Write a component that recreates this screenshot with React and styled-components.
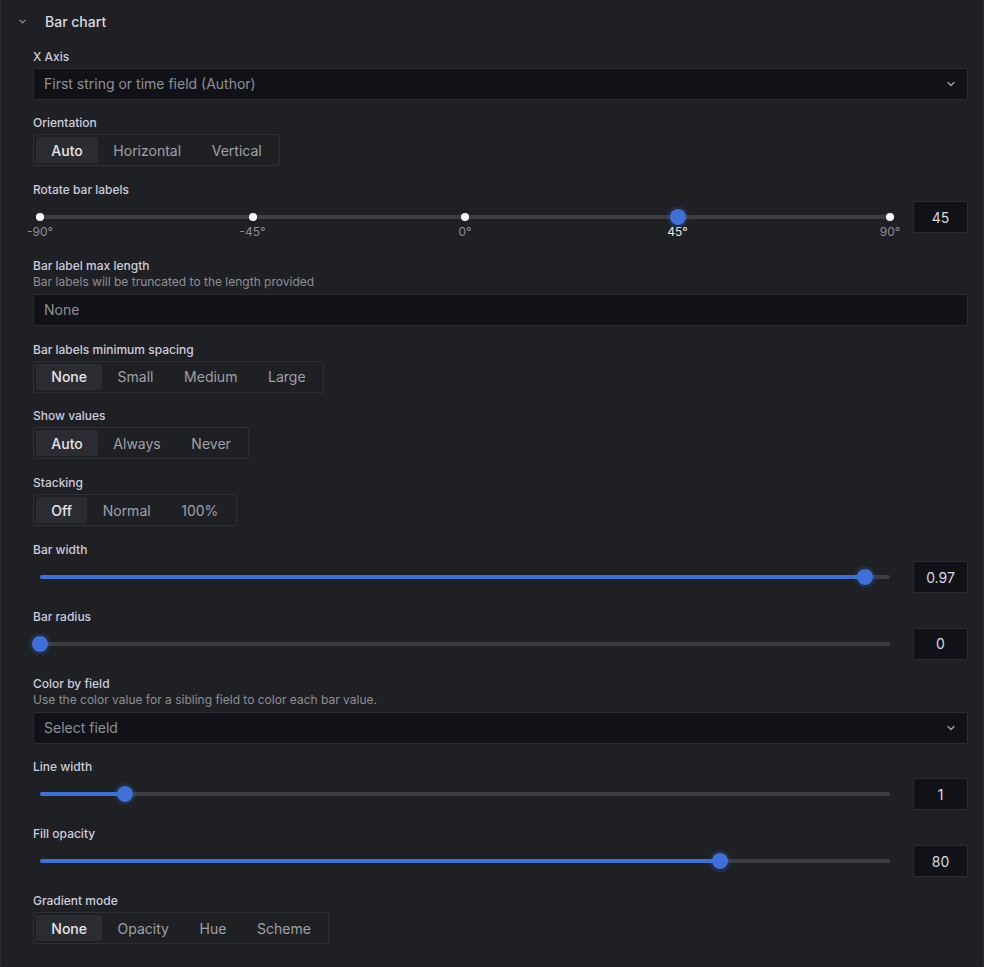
import React from "react"
import styled, { createGlobalStyle, css } from "styled-components"

const GlobalStyle = createGlobalStyle`
  html, body {
    margin: 0;
    padding: 0;
    background: #1f2024;
  }
  body {
    font-family: Inter, "Noto Sans", "Liberation Sans", sans-serif;
    color: #ccccdc;
    -webkit-font-smoothing: antialiased;
  }
`

const Pane = styled.div`
  width: 984px;
  min-height: 967px;
  box-sizing: border-box;
  background: #1f2024;
  border-left: 1px solid #2a2b30;
  border-right: 1px solid #2a2b30;
`

const Header = styled.div`
  display: flex;
  align-items: center;
  height: 42px;
  padding-left: 16px;
  box-sizing: border-box;
`

const Chevron = styled.span`
  display: flex;
  width: 10px;
  justify-content: center;
  margin-right: 18px;
  color: #8e8e96;
`

const Title = styled.h2`
  margin: 0;
  font-size: 14px;
  font-weight: 500;
  color: #d8d9e0;
`

// gap is a touch under 16px: the reference drifts ~2px over the whole list
const Body = styled.div`
  padding: 6.5px 15px 16px 32px;
  display: flex;
  flex-direction: column;
  gap: 15.8px;
`

const Field = styled.div`
  display: flex;
  flex-direction: column;
`

const Label = styled.label`
  font-size: 12px;
  font-weight: 500;
  line-height: 15px;
  color: #ccccdc;
`

const Description = styled.div`
  font-size: 12px;
  line-height: 16px;
  margin-top: 1px;
  color: #8e8e94;
`

const Control = styled.div`
  margin-top: 4px;
  display: flex;
  align-items: flex-start;
`

const InputBox = styled.div`
  box-sizing: border-box;
  height: 32px;
  flex: 1;
  display: flex;
  align-items: center;
  padding: 0 11px 0 10px;
  background: #111217;
  border: 1px solid #2c2d33;
  border-radius: 2px;
  font-size: 14px;
  color: #8f9096;
`

const Grow = styled.span`
  flex: 1;
`

const RadioGroup = styled.div`
  display: inline-flex;
  box-sizing: border-box;
  height: 32px;
  padding: 2px;
  border: 1px solid #2f3036;
  border-radius: 2px;
`

const RadioItem = styled.div`
  display: flex;
  align-items: center;
  padding: 0 15.3px;
  font-size: 14px;
  border-radius: 2px;
  color: #9fa0a7;
  ${p =>
    p.active &&
    css`
      background: #2b2c31;
      color: #e4e5ea;
      font-weight: 500;
    `}
`

const SliderRow = styled.div`
  display: flex;
  flex: 1;
  gap: 16px;
  align-items: flex-start;
`

const SliderArea = styled.div`
  flex: 1;
  height: ${p => (p.marks ? "41px" : "32px")};
  padding: 0 7px;
`

const Track = styled.div`
  position: relative;
  margin-top: 14px;
  height: 4px;
  border-radius: 2px;
  background: #3d3e43;
`

const Fill = styled.div`
  position: absolute;
  left: 0;
  top: 0;
  bottom: 0;
  border-radius: 2px;
  background: #3d71d9;
`

const Thumb = styled.div`
  position: absolute;
  top: 2px;
  width: 16px;
  height: 16px;
  margin: -8px 0 0 -8px;
  border-radius: 50%;
  background: #3d71d9;
  box-shadow: 0 0 0 3px rgba(61, 113, 217, 0.15);
`

const Dot = styled.div`
  position: absolute;
  top: 2px;
  width: 8px;
  height: 8px;
  margin: -4px 0 0 -4px;
  border-radius: 50%;
  background: #ffffff;
`

const MarkLabel = styled.div`
  position: absolute;
  top: 9px;
  transform: translateX(-50%);
  font-size: 12px;
  color: ${p => (p.active ? "#e4e5ea" : "#8e8e94")};
  white-space: nowrap;
`

const ValueBox = styled.div`
  box-sizing: border-box;
  width: 55px;
  height: 32px;
  display: flex;
  align-items: center;
  justify-content: center;
  background: #111217;
  border: 1px solid #2c2d33;
  border-radius: 2px;
  font-size: 14px;
  color: #d8d9e0;
`

const ChevronDown = ({ size = 10, color = "#9fa0a7" }) => (
  <svg width={size} height={size} viewBox="0 0 10 10">
    <polyline points="2,3.5 5,6.5 8,3.5" fill="none" stroke={color} strokeWidth="1.4" strokeLinecap="round" strokeLinejoin="round" />
  </svg>
)

const Select = ({ placeholder }) => (
  <InputBox>
    <Grow>{placeholder}</Grow>
    <ChevronDown />
  </InputBox>
)

const Radio = ({ options, value }) => (
  <RadioGroup>
    {options.map(o => (
      <RadioItem key={o} active={o === value}>
        {o}
      </RadioItem>
    ))}
  </RadioGroup>
)

const Slider = ({ min, max, value, marks, display }) => {
  const pct = v => ((v - min) / (max - min)) * 100
  return (
    <SliderRow>
      <SliderArea marks={!!marks}>
        <Track>
          {!marks && <Fill style={{ width: `${pct(value)}%` }} />}
          {marks &&
            marks.map(m => (
              <React.Fragment key={m}>
                {m !== value && <Dot style={{ left: `${pct(m)}%` }} />}
                <MarkLabel active={m === value} style={{ left: `${pct(m)}%` }}>
                  {m}°
                </MarkLabel>
              </React.Fragment>
            ))}
          <Thumb style={{ left: `${pct(value)}%` }} />
        </Track>
      </SliderArea>
      <ValueBox>{display ?? value}</ValueBox>
    </SliderRow>
  )
}

const Option = ({ label, description, children }) => (
  <Field>
    <Label>{label}</Label>
    {description && <Description>{description}</Description>}
    <Control>{children}</Control>
  </Field>
)

export default function App() {
  return (
    <Pane>
      <GlobalStyle />
      <Header>
        <Chevron>
          <ChevronDown size={9} color="#8e8e96" />
        </Chevron>
        <Title>Bar chart</Title>
      </Header>
      <Body>
        <Option label="X Axis">
          <Select placeholder="First string or time field (Author)" />
        </Option>
        <Option label="Orientation">
          <Radio options={["Auto", "Horizontal", "Vertical"]} value="Auto" />
        </Option>
        <Option label="Rotate bar labels">
          <Slider min={-90} max={90} value={45} marks={[-90, -45, 0, 45, 90]} />
        </Option>
        <Option label="Bar label max length" description="Bar labels will be truncated to the length provided">
          <InputBox>None</InputBox>
        </Option>
        <Option label="Bar labels minimum spacing">
          <Radio options={["None", "Small", "Medium", "Large"]} value="None" />
        </Option>
        <Option label="Show values">
          <Radio options={["Auto", "Always", "Never"]} value="Auto" />
        </Option>
        <Option label="Stacking">
          <Radio options={["Off", "Normal", "100%"]} value="Off" />
        </Option>
        <Option label="Bar width">
          <Slider min={0} max={1} value={0.97} />
        </Option>
        <Option label="Bar radius">
          <Slider min={0} max={0.5} value={0} />
        </Option>
        <Option label="Color by field" description="Use the color value for a sibling field to color each bar value.">
          <Select placeholder="Select field" />
        </Option>
        <Option label="Line width">
          <Slider min={0} max={10} value={1} />
        </Option>
        <Option label="Fill opacity">
          <Slider min={0} max={100} value={80} />
        </Option>
        <Option label="Gradient mode">
          <Radio options={["None", "Opacity", "Hue", "Scheme"]} value="None" />
        </Option>
      </Body>
    </Pane>
  )
}
